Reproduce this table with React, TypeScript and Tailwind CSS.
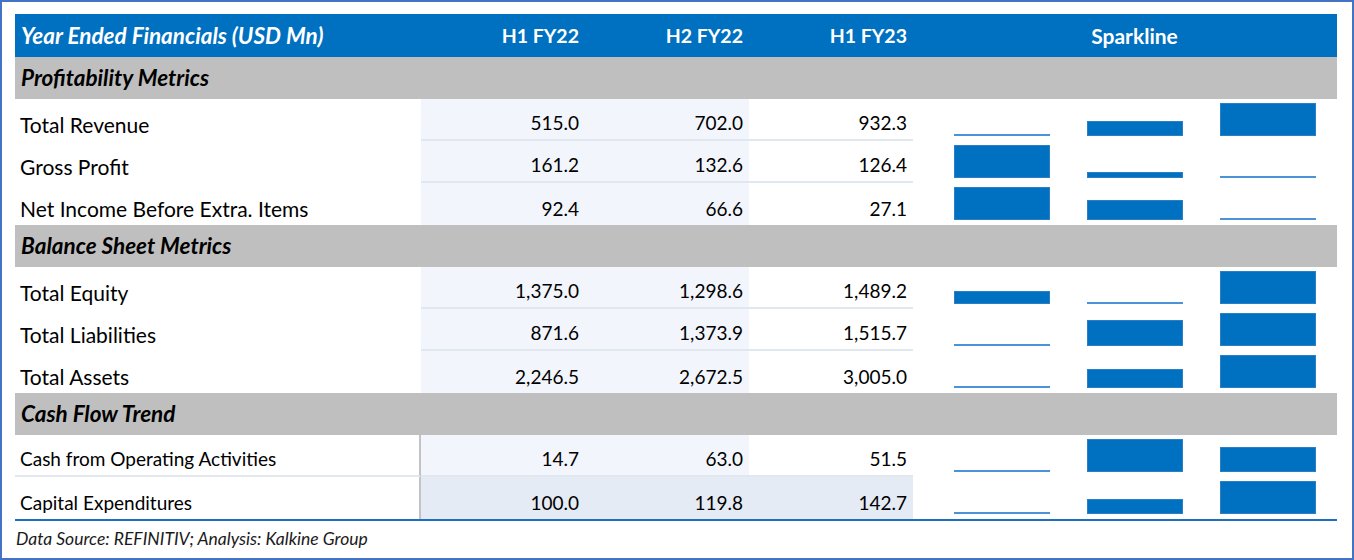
import clsx from 'clsx';

type Row = {
  label: string;
  values: number[];
};

type Section = {
  title: string;
  cash?: boolean;
  rows: Row[];
};

const sections: Section[] = [
  {
    title: 'Profitability Metrics',
    rows: [
      { label: 'Total Revenue', values: [515.0, 702.0, 932.3] },
      { label: 'Gross Profit', values: [161.2, 132.6, 126.4] },
      { label: 'Net Income Before Extra. Items', values: [92.4, 66.6, 27.1] },
    ],
  },
  {
    title: 'Balance Sheet Metrics',
    rows: [
      { label: 'Total Equity', values: [1375.0, 1298.6, 1489.2] },
      { label: 'Total Liabilities', values: [871.6, 1373.9, 1515.7] },
      { label: 'Total Assets', values: [2246.5, 2672.5, 3005.0] },
    ],
  },
  {
    title: 'Cash Flow Trend',
    cash: true,
    rows: [
      { label: 'Cash from Operating Activities', values: [14.7, 63.0, 51.5] },
      { label: 'Capital Expenditures', values: [100.0, 119.8, 142.7] },
    ],
  },
];

const fmt = (n: number) =>
  n.toLocaleString('en-US', { minimumFractionDigits: 1, maximumFractionDigits: 1 });

const FONT = "font-['Lato','Open_Sans',sans-serif]";

// Excel-style column sparkline: min value is drawn as a hairline, max fills the cell
function Sparkline({ values }: { values: number[] }) {
  const min = Math.min(...values);
  const max = Math.max(...values);
  return (
    <div className="grid flex-1 grid-cols-3 pl-[22px] pr-[3px]">
      {values.map((v, i) => {
        const h = ((v - min) / (max - min)) * 33;
        return (
          <div key={i} className="flex items-end justify-center pb-[5px]">
            {v === min ? (
              <div className="h-[2px] w-[96px] bg-[#4b92d6]" />
            ) : (
              <div
                className="w-[96px] border border-[#2c7fc7] bg-[#0070c0]"
                style={{ height: Math.max(h, 3) }}
              />
            )}
          </div>
        );
      })}
    </div>
  );
}

function DataRow({ row, cash, last, idx }: { row: Row; cash?: boolean; last: boolean; idx: number }) {
  const capex = cash && idx === 1;
  return (
    <div className="flex h-[42px]">
      <div
        className={clsx(
          'flex w-[406px] items-end pb-[4px] pl-[5px] leading-[24px] text-black',
          cash ? 'border-r-2 border-[#c3c3c3] text-[19px]' : 'text-[21px]',
          cash && !last && 'border-b-2 border-b-[#e3e8f0]'
        )}
      >
        {row.label}
      </div>
      {row.values.map((v, i) => (
        <div
          key={i}
          className={clsx(
            'flex w-[164px] items-end justify-end pb-[4px] pr-[6px] text-[19px] leading-[24px] text-black',
            capex ? 'bg-[#e5ebf5]' : i < 2 ? 'bg-[#f2f5fb]' : 'bg-white',
            !last && 'border-b-2 border-[#e1e7ef]'
          )}
        >
          {fmt(v)}
        </div>
      ))}
      <Sparkline values={row.values} />
    </div>
  );
}

export default function App() {
  return (
    <div className={clsx('h-[560px] w-[1354px] border-2 border-[#4472c4] bg-white pl-[13px] pt-[12px]', FONT)}>
      <div className="w-[1322px]">
        <div className="flex h-[43px] items-center bg-[#0070c0] font-bold text-white">
          <div className="w-[406px] pl-[6px] text-[22.5px] italic">Year Ended Financials (USD Mn)</div>
          <div className="w-[164px] pr-[6px] text-right text-[19.5px]">H1 FY22</div>
          <div className="w-[164px] pr-[6px] text-right text-[19.5px]">H2 FY22</div>
          <div className="w-[164px] pr-[6px] text-right text-[19.5px]">H1 FY23</div>
          <div className="flex-1 pl-[22px] pr-[3px] text-center text-[21px]">Sparkline</div>
        </div>
        {sections.map((s) => (
          <div key={s.title}>
            <div className="flex h-[42px] items-center bg-[#bfbfbf] pl-[6px] text-[22.5px] font-bold italic text-black">
              {s.title}
            </div>
            {s.rows.map((r, i) => (
              <DataRow key={r.label} row={r} cash={s.cash} idx={i} last={i === s.rows.length - 1} />
            ))}
          </div>
        ))}
        <div className="h-[2px] bg-[#1f6fbf]" />
        <div className="pl-[1px] pt-[8px] text-[17.5px] italic leading-[20px] text-[#1a1a1a]">
          Data Source: REFINITIV; Analysis: Kalkine Group
        </div>
      </div>
    </div>
  );
}
